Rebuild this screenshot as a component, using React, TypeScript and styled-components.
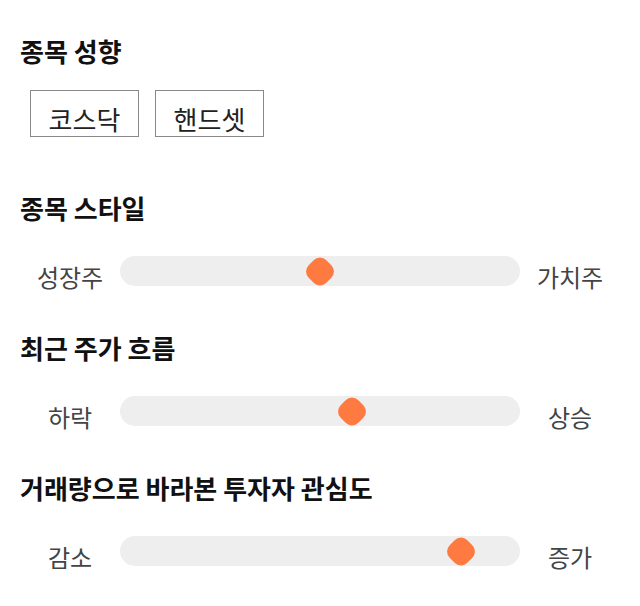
import React from 'react'
import styled, { createGlobalStyle } from 'styled-components'

const GlobalStyle = createGlobalStyle`
	body {
		margin: 0;
		background: #ffffff;
		font-family: 'Noto Sans CJK KR', 'Noto Sans', sans-serif;
	}
`

interface SliderRowProps {
	left: string
	right: string
	value: number
}

const sliders: { title: string; left: string; right: string; value: number }[] = [
	{ title: '종목 스타일', left: '성장주', right: '가치주', value: 50 },
	{ title: '최근 주가 흐름', left: '하락', right: '상승', value: 58.5 },
	{ title: '거래량으로 바라본 투자자 관심도', left: '감소', right: '증가', value: 88 },
]

// rounded diamond handle
const Thumb: React.FC = () => (
	<svg width="29" height="29" viewBox="0 0 29 29">
		<rect
			x="2"
			y="2"
			width="25"
			height="25"
			rx="9"
			fill="#ff7a40"
			transform="rotate(45 14.5 14.5)"
		/>
	</svg>
)

const SliderRow: React.FC<SliderRowProps> = ({ left, right, value }) => {
	return (
		<StyledRow>
			<StyledLabel>{left}</StyledLabel>
			<StyledTrack>
				<StyledThumbWrap style={{ left: `calc(14px + (100% - 28px) * ${value / 100})` }}>
					<Thumb />
				</StyledThumbWrap>
			</StyledTrack>
			<StyledLabel>{right}</StyledLabel>
		</StyledRow>
	)
}

const App: React.FC = () => {
	return (
		<>
			<GlobalStyle />
			<StyledPage>
				<StyledSection gap={56}>
					<StyledTitle>종목 성향</StyledTitle>
					<StyledButtons>
						<StyledButton>코스닥</StyledButton>
						<StyledButton>핸드셋</StyledButton>
					</StyledButtons>
				</StyledSection>
				{sliders.map((s) => (
					<StyledSection key={s.title} gap={47}>
						<StyledTitle>{s.title}</StyledTitle>
						<SliderRow left={s.left} right={s.right} value={s.value} />
					</StyledSection>
				))}
			</StyledPage>
		</>
	)
}

const StyledPage = styled.div`
	padding: 36px 20px 0 20px;
	display: flex;
	flex-direction: column;
`

const StyledSection = styled.section<{ gap: number }>`
	display: flex;
	flex-direction: column;
	margin-bottom: ${(props) => props.gap}px;
`

const StyledTitle = styled.h2`
	margin: 0;
	font-size: 26px;
	line-height: 30px;
	font-weight: 700;
	color: #111111;
	white-space: nowrap;
`

const StyledButtons = styled.div`
	display: flex;
	gap: 16px;
	margin-top: 24px;
	padding-left: 10px;
`

const StyledButton = styled.button`
	box-sizing: border-box;
	width: 109px;
	height: 47px;
	border: 1px solid #888888;
	background: #ffffff;
	font-family: inherit;
	font-size: 26px;
	color: #222222;
	padding: 9px 0 0 0;
	display: flex;
	align-items: center;
	justify-content: center;
`

const StyledRow = styled.div`
	display: flex;
	align-items: center;
	height: 30px;
	margin-top: 33px;
`

const StyledLabel = styled.span`
	width: 100px;
	flex: none;
	text-align: center;
	font-size: 24px;
	line-height: 30px;
	margin-top: 12px;
	color: #444444;
`

const StyledTrack = styled.div`
	position: relative;
	flex: 1;
	height: 30px;
	border-radius: 15px;
	background: #eeeeee;
`

const StyledThumbWrap = styled.div`
	position: absolute;
	top: 1px;
	width: 29px;
	height: 29px;
	transform: translateX(-50%);
	> svg {
		display: block;
	}
`

export default App
